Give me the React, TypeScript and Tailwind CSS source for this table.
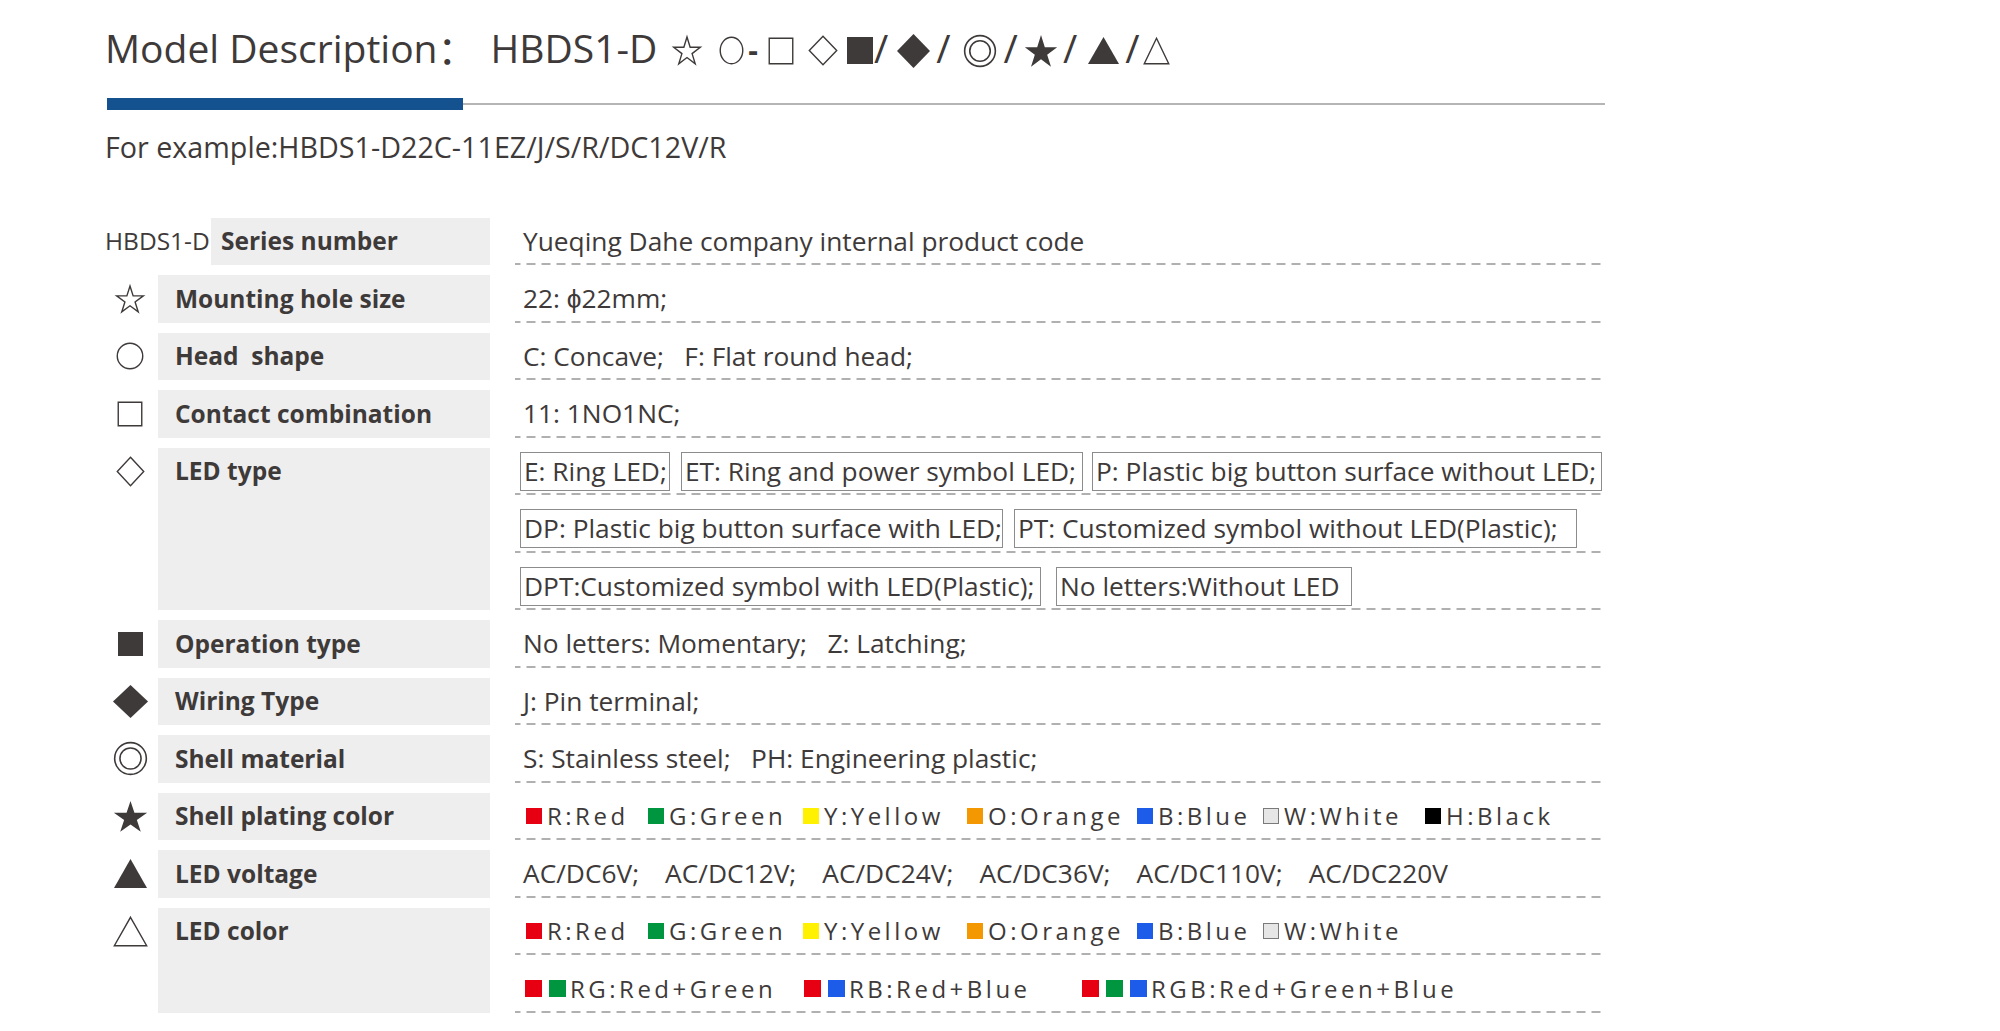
import React from 'react';

const INK = '#3e3a39';

type Kind =
  | 'star'
  | 'starFill'
  | 'circle'
  | 'square'
  | 'squareFill'
  | 'diamond'
  | 'diamondFill'
  | 'double'
  | 'tri'
  | 'triFill';

const STAR =
  '50,0 61.23,34.55 97.55,34.55 68.16,55.9 79.39,90.45 50,69.1 20.61,90.45 31.84,55.9 2.45,34.55 38.77,34.55';

// simple outline / filled marks used in the title and the left column
const Mark: React.FC<{ kind: Kind; w: number; h: number; className?: string }> = ({ kind, w, h, className }) => {
  const line = { fill: 'none', stroke: INK, strokeWidth: 1.4, vectorEffect: 'non-scaling-stroke' as const };
  const solid = { fill: INK };
  return (
    <svg width={w} height={h} viewBox="0 0 100 100" preserveAspectRatio="none" overflow="visible" className={className}>
      {kind === 'star' && <polygon points={STAR} transform="scale(1 1.1)" {...line} />}
      {kind === 'starFill' && <polygon points={STAR} transform="scale(1 1.1)" {...solid} />}
      {kind === 'circle' && <ellipse cx={50} cy={50} rx={49} ry={49} {...line} />}
      {kind === 'square' && <rect x={1} y={1} width={98} height={98} {...line} />}
      {kind === 'squareFill' && <rect x={0} y={0} width={100} height={100} {...solid} />}
      {kind === 'diamond' && <polygon points="50,1 99,50 50,99 1,50" {...line} />}
      {kind === 'diamondFill' && <polygon points="50,0 100,50 50,100 0,50" {...solid} />}
      {kind === 'double' && (
        <>
          <ellipse cx={50} cy={50} rx={48} ry={48} {...line} strokeWidth={1.6} />
          <ellipse cx={50} cy={50} rx={32} ry={32} {...line} strokeWidth={1.6} />
        </>
      )}
      {kind === 'tri' && <polygon points="50,1 99,99 1,99" {...line} />}
      {kind === 'triFill' && <polygon points="50,0 100,100 0,100" {...solid} />}
    </svg>
  );
};

const dash =
  'bg-[linear-gradient(to_right,#b0b0b0_9px,transparent_9px)] bg-[length:15px_2px] bg-bottom bg-repeat-x';

const Line: React.FC<{ children: React.ReactNode; boxed?: boolean }> = ({ children, boxed }) => (
  <div className={`h-[47.5px] flex items-center whitespace-pre ${boxed ? 'pl-[5px]' : 'pl-[8px]'} ${dash}`}>
    {children}
  </div>
);

const Box: React.FC<{ w: string; ml?: string; children: React.ReactNode }> = ({ w, ml = '', children }) => (
  <div className={`h-[39px] border border-[#8c8c8c] pl-[3px] flex items-center whitespace-nowrap ${w} ${ml}`}>
    {children}
  </div>
);

type Swatch = { bg: string; label: string; w: string };

const colours: Swatch[] = [
  { bg: 'bg-[#e60012]', label: 'R:Red', w: 'w-[122px]' },
  { bg: 'bg-[#00963f]', label: 'G:Green', w: 'w-[155px]' },
  { bg: 'bg-[#fff100]', label: 'Y:Yellow', w: 'w-[164px]' },
  { bg: 'bg-[#f39800]', label: 'O:Orange', w: 'w-[170px]' },
  { bg: 'bg-[#1d5ce8]', label: 'B:Blue', w: 'w-[126px]' },
  { bg: 'bg-[#e6e6e6] border border-[#7a7a7a]', label: 'W:White', w: 'w-[162px]' },
  { bg: 'bg-[#000000]', label: 'H:Black', w: 'w-[126px]' },
];

const ColourLine: React.FC<{ items: Swatch[] }> = ({ items }) => (
  <div className="flex items-center text-[24px] tracking-[3.5px] pl-[3px]">
    {items.map((c) => (
      <div key={c.label} className={`flex items-center shrink-0 ${c.w}`}>
        <span className={`w-[16px] h-[16px] shrink-0 ${c.bg}`} />
        <span className="ml-[5px]">{c.label}</span>
      </div>
    ))}
  </div>
);

const Mix: React.FC<{ bgs: string[]; label: string; w: string }> = ({ bgs, label, w }) => (
  <div className={`flex items-center shrink-0 ${w}`}>
    {bgs.map((b, i) => (
      <span key={i} className={`w-[17px] h-[17px] shrink-0 ${b} ${i > 0 ? 'ml-[7px]' : ''}`} />
    ))}
    <span className="ml-[4px]">{label}</span>
  </div>
);

type RowData = { icon?: React.ReactNode; prefix?: string; label: string; lines: React.ReactNode[] };

const Row: React.FC<RowData> = ({ icon, prefix, label, lines }) => (
  <div className="flex">
    <div className="w-[385px] shrink-0 flex">
      {prefix ? (
        <div className="w-[106px] h-[47.5px] flex items-center text-[24.5px]">{prefix}</div>
      ) : (
        <div className="w-[53px] h-[47.5px] flex items-center justify-center pr-[3px]">{icon}</div>
      )}
      <div className={`flex-1 bg-[#eeeeee] ${prefix ? 'pl-[10px]' : 'pl-[17px]'}`}>
        <div className="h-[47.5px] flex items-center font-bold text-[24.5px] whitespace-pre">{label}</div>
      </div>
    </div>
    <div className="ml-[25px] w-[1088px] flex flex-col gap-[10px] text-[26.3px]">{lines}</div>
  </div>
);

const rows: RowData[] = [
  { prefix: 'HBDS1-D', label: 'Series number', lines: [<Line>Yueqing Dahe company internal product code</Line>] },
  { icon: <Mark kind="star" w={28} h={26} />, label: 'Mounting hole size', lines: [<Line>22: ϕ22mm;</Line>] },
  { icon: <Mark kind="circle" w={26} h={26} />, label: 'Head  shape', lines: [<Line>{'C: Concave;   F: Flat round head;'}</Line>] },
  { icon: <Mark kind="square" w={24} h={24} />, label: 'Contact combination', lines: [<Line>11: 1NO1NC;</Line>] },
  {
    icon: <Mark kind="diamond" w={27} h={29} />,
    label: 'LED type',
    lines: [
      <Line boxed>
        <Box w="w-[150px]">E: Ring LED;</Box>
        <Box w="w-[402px]" ml="ml-[11px]">ET: Ring and power symbol LED;</Box>
        <Box w="w-[510px]" ml="ml-[9px]">P: Plastic big button surface without LED;</Box>
      </Line>,
      <Line boxed>
        <Box w="w-[483px]">DP: Plastic big button surface with LED;</Box>
        <Box w="w-[563px]" ml="ml-[11px]">PT: Customized symbol without LED(Plastic);</Box>
      </Line>,
      <Line boxed>
        <Box w="w-[521px]">DPT:Customized symbol with LED(Plastic);</Box>
        <Box w="w-[296px]" ml="ml-[15px]">No letters:Without LED</Box>
      </Line>,
    ],
  },
  { icon: <Mark kind="squareFill" w={25} h={24} />, label: 'Operation type', lines: [<Line>{'No letters: Momentary;   Z: Latching;'}</Line>] },
  { icon: <Mark kind="diamondFill" w={35} h={33} />, label: 'Wiring Type', lines: [<Line>J: Pin terminal;</Line>] },
  { icon: <Mark kind="double" w={33} h={33} />, label: 'Shell material', lines: [<Line>{'S: Stainless steel;   PH: Engineering plastic;'}</Line>] },
  {
    icon: <Mark kind="starFill" w={35} h={31} />,
    label: 'Shell plating color',
    lines: [
      <Line>
        <ColourLine items={colours} />
      </Line>,
    ],
  },
  {
    icon: <Mark kind="triFill" w={33} h={29} />,
    label: 'LED voltage',
    lines: [
      <Line>
        <div className="flex gap-[26px]">
          {['AC/DC6V;', 'AC/DC12V;', 'AC/DC24V;', 'AC/DC36V;', 'AC/DC110V;', 'AC/DC220V'].map((v) => (
            <span key={v}>{v}</span>
          ))}
        </div>
      </Line>,
    ],
  },
  {
    icon: <Mark kind="tri" w={33} h={29} />,
    label: 'LED color',
    lines: [
      <Line>
        <ColourLine items={colours.slice(0, 6)} />
      </Line>,
      <Line>
        <div className="flex items-center text-[24px] tracking-[3.5px] pl-[2px]">
          <Mix bgs={['bg-[#e60012]', 'bg-[#00963f]']} label="RG:Red+Green" w="w-[279px]" />
          <Mix bgs={['bg-[#e60012]', 'bg-[#1d5ce8]']} label="RB:Red+Blue" w="w-[278px]" />
          <Mix bgs={['bg-[#e60012]', 'bg-[#00963f]', 'bg-[#1d5ce8]']} label="RGB:Red+Green+Blue" w="w-[380px]" />
        </div>
      </Line>,
    ],
  },
];

export default function App() {
  return (
    <div className="w-[2000px] h-[1031px] bg-white overflow-hidden font-['Open_Sans','Noto_Sans_CJK_SC',sans-serif] text-[#3e3a39]">
      <div className="pl-[105px] pt-[28px] w-[1605px]">
        {/* heading */}
        <div className="flex items-center h-[39px] text-[39px] leading-none whitespace-pre">
          <span>Model Description</span>
          <span className="font-['Noto_Sans_CJK_SC',sans-serif]">：</span>
          <span className="ml-[14px]">HBDS1-D</span>
          <Mark kind="star" w={28} h={27} className="ml-[16px] mt-[6px]" />
          <Mark kind="circle" w={23} h={27} className="ml-[19px] mt-[6px]" />
          <span className="ml-[5px] font-bold text-[30px] mt-[4px]">-</span>
          <Mark kind="square" w={24} h={26} className="ml-[11px] mt-[6px]" />
          <Mark kind="diamond" w={28} h={29} className="ml-[16px] mt-[6px]" />
          <Mark kind="squareFill" w={26} h={27} className="ml-[10px] mt-[6px]" />
          <span className="ml-[1px]">/</span>
          <Mark kind="diamondFill" w={33} h={34} className="ml-[9px] mt-[6px]" />
          <span className="ml-[6px]">/</span>
          <Mark kind="double" w={32} h={32} className="ml-[13px] mt-[6px]" />
          <span className="ml-[8px]">/</span>
          <Mark kind="starFill" w={34} h={32} className="ml-[6px] mt-[6px]" />
          <span className="ml-[5px]">/</span>
          <Mark kind="triFill" w={31} h={27} className="ml-[11px] mt-[6px]" />
          <span className="ml-[6px]">/</span>
          <Mark kind="tri" w={25} h={26} className="ml-[4px] mt-[6px]" />
        </div>

        {/* rule */}
        <div className="mt-[31px] h-[12px] flex items-center">
          <div className="ml-[2px] w-[356px] h-[12px] bg-[#14518f]" />
          <div className="flex-1 h-[2px] bg-[#b5b5b5]" />
        </div>

        <div className="mt-[23px] text-[28.7px] leading-none">For example:HBDS1-D22C-11EZ/J/S/R/DC12V/R</div>

        {/* table */}
        <div className="mt-[56px] flex flex-col gap-[10px]">
          {rows.map((r) => (
            <Row key={r.label} {...r} />
          ))}
        </div>
      </div>
    </div>
  );
}
